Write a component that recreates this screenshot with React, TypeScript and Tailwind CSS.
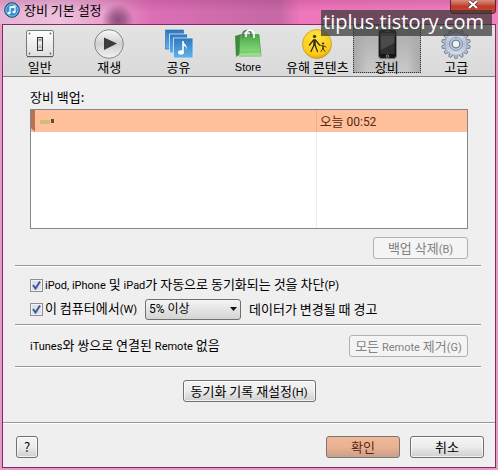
import React, { useState } from 'react';

const buttonBase =
  'h-[22px] rounded-[3px] border border-[#707070] bg-gradient-to-b from-[#f5f5f5] via-[#ebebeb] to-[#cfcfcf] text-center leading-5 shadow-[inset_0_0_0_1px_rgba(255,255,255,0.7)]';
const disabledButton =
  'h-[22px] rounded-[3px] border border-[#adb2b5] bg-[#f4f4f4] text-center leading-5 text-[#838383]';

const SwitchIcon = () => (
  <svg viewBox="0 0 30 30" className="h-[30px] w-[30px] shrink-0" aria-hidden="true">
    <defs>
      <linearGradient id="plate" x1="0" y1="0" x2="0" y2="1">
        <stop offset="0" stopColor="#fff" />
        <stop offset="1" stopColor="#dedede" />
      </linearGradient>
      <linearGradient id="toggle" x1="0" y1="0" x2="0" y2="1">
        <stop offset="0" stopColor="#777" />
        <stop offset=".4" stopColor="#fff" />
        <stop offset="1" stopColor="#aaa" />
      </linearGradient>
    </defs>
    <rect x="1.500" y="1.500" width="27" height="26" rx="1.5" fill="url(#plate)" stroke="#777" />
    <path d="M2 27.700h26" stroke="#555" />
    <rect x="12.500" y="8.500" width="5" height="13" fill="#ddd" stroke="#333" />
    <rect x="13.500" y="10" width="3" height="9" fill="url(#toggle)" />
    <g fill="#666">
      <circle cx="4.5" cy="4.500" r=".9" />
      <circle cx="25.5" cy="4.500" r=".9" />
      <circle cx="4.5" cy="24.500" r=".9" />
      <circle cx="25.5" cy="24.500" r=".9" />
    </g>
  </svg>
);

const PlayIcon = () => (
  <svg viewBox="0 0 30 30" className="h-[30px] w-[30px] shrink-0" aria-hidden="true">
    <defs>
      <linearGradient id="play" x1="0" y1="0" x2="0" y2="1">
        <stop offset="0" stopColor="#fafafa" />
        <stop offset=".5" stopColor="#cfcfcf" />
        <stop offset="1" stopColor="#f4f4f4" />
      </linearGradient>
    </defs>
    <circle cx="15" cy="15" r="14.300" fill="url(#play)" stroke="#858585" />
    <path d="M10 8.500 23 14.500 10 21z" fill="#3c3c3c" />
  </svg>
);

const ShareIcon = () => (
  <svg viewBox="0 0 30 30" className="h-[30px] w-[30px] shrink-0" aria-hidden="true">
    <defs>
      <linearGradient id="share" x1="0" y1="0" x2="0" y2="1">
        <stop offset="0" stopColor="#2f77bd" />
        <stop offset="1" stopColor="#62b2ed" />
      </linearGradient>
    </defs>
    <g fill="url(#share)">
      <rect x="1.500" y="1" width="18" height="19" stroke="#2d6aa8" strokeWidth=".6" />
      <rect x="5.500" y="5" width="18" height="19" stroke="#d7e9f8" strokeWidth=".8" />
      <rect x="9.500" y="9" width="19.500" height="20" stroke="#d7e9f8" strokeWidth=".8" />
    </g>
    <path d="M19 12v11" stroke="#fff" strokeWidth="1.600" />
    <path d="M19 12c.5 3 5 4 3.500 9 0-3-1.500-4-3.500-4.500z" fill="#fff" />
    <ellipse cx="17" cy="23.500" rx="2.900" ry="2.200" fill="#fff" />
  </svg>
);

const StoreIcon = () => (
  <svg viewBox="0 0 30 30" className="h-[30px] w-[30px] shrink-0" aria-hidden="true">
    <defs>
      <linearGradient id="bag" x1="0" y1="0" x2="0" y2="1">
        <stop offset="0" stopColor="#4ba64a" />
        <stop offset=".75" stopColor="#80d476" />
        <stop offset="1" stopColor="#55b64f" />
      </linearGradient>
    </defs>
    <path d="M2 7 7 5.500 8 24 3 28z" fill="#40883b" />
    <path d="M7 5.500h19L28 27H6z" fill="url(#bag)" stroke="#3d943c" strokeWidth=".6" />
    <path d="m6.500 24 21-.5.500 3.500H6z" fill="#a3e399" opacity=".8" />
    <path d="M10 9V5c0-4 8-5 8 0v3" fill="none" stroke="#6a756a" strokeWidth="1.800" />
    <path d="M13 8V5c0-5 8-5 8 0v4" fill="none" stroke="#fff" strokeWidth="1.600" />
  </svg>
);

const ParentalIcon = () => (
  <svg viewBox="0 0 30 30" className="h-[30px] w-[30px] shrink-0" aria-hidden="true">
    <defs>
      <radialGradient id="sun" cx=".45" cy=".3" r=".75">
        <stop offset="0" stopColor="#ffe545" />
        <stop offset=".75" stopColor="#fcca17" />
        <stop offset="1" stopColor="#d79508" />
      </radialGradient>
    </defs>
    <circle cx="15" cy="15" r="14.500" fill="url(#sun)" stroke="#c39222" strokeWidth=".7" />
    <g fill="none" stroke="#34300f" strokeLinecap="round">
      <circle cx="12.500" cy="7.500" r="1.200" fill="#34300f" />
      <path d="M12.500 11.500v4" strokeWidth="2.500" />
      <path d="m11.500 11-4 5M13.500 11l4 5M12 16l-3 6.500M13 16l2.500 6.500" strokeWidth="1.300" />
      <circle cx="21" cy="14.500" r=".7" fill="#34300f" />
      <path d="M21 17v2.500" strokeWidth="1.500" />
      <path d="m20.500 17-2.500-.8M21.500 17l2.500 1M21 19.500 19 22.500M21 19.500l2 3" strokeWidth=".9" />
    </g>
  </svg>
);

const PhoneIcon = () => (
  <svg viewBox="0 0 30 30" className="h-[30px] w-[30px] shrink-0" aria-hidden="true">
    <rect x="6.500" y=".5" width="18" height="29" rx="3" fill="#171717" stroke="#777" />
    <rect x="8.500" y="4" width="14" height="21" fill="#303030" />
    <path d="M22.500 4v10L8.500 21V4z" fill="#4b4b4b" />
    <path d="M13 2.300h5" stroke="#888" strokeWidth=".8" />
    <circle cx="15.500" cy="27.200" r="1.300" fill="#222" stroke="#ccc" strokeWidth=".6" />
  </svg>
);

const GearIcon = () => (
  <svg viewBox="0 0 30 30" className="h-[30px] w-[30px] shrink-0" aria-hidden="true">
    <defs>
      <linearGradient id="gear" x1="0" y1="0" x2="0" y2="1">
        <stop offset="0" stopColor="#dbe3ee" />
        <stop offset=".5" stopColor="#b2bfd1" />
        <stop offset="1" stopColor="#d9e1ed" />
      </linearGradient>
    </defs>
    <g fill="#b8c4d5" stroke="#68758a" strokeWidth=".8">
      {Array.from({ length: 14 }, (_, i) => (
        <path key={i} d="m12.800 5 1-4.300h2.400l1 4.300z" transform={`rotate(${(i * 360) / 14} 15 15)`} />
      ))}
    </g>
    <circle cx="15" cy="15" r="11.200" fill="url(#gear)" stroke="#8794a7" strokeWidth=".5" />
    <circle cx="15" cy="15" r="6.500" fill="none" stroke="#8495ae" />
    <circle cx="15" cy="15" r="3.800" fill="#eff1f4" stroke="#6f7f97" strokeWidth="1.300" />
  </svg>
);

const tabs = [
  { id: 'general', name: '일반', icon: <SwitchIcon /> },
  { id: 'playback', name: '재생', icon: <PlayIcon /> },
  { id: 'sharing', name: '공유', icon: <ShareIcon /> },
  { id: 'store', name: 'Store', icon: <StoreIcon /> },
  { id: 'parental', name: '유해 콘텐츠', icon: <ParentalIcon /> },
  { id: 'devices', name: '장비', icon: <PhoneIcon /> },
  { id: 'advanced', name: '고급', icon: <GearIcon /> },
];

const Latin = ({ children }: { children: React.ReactNode }) => (
  <span className="font-['Roboto',sans-serif] text-[11px]">{children}</span>
);

const Divider = () => <hr className="border-0 border-t border-[#989898] shadow-[0_1px_0_#fff]" />;

const CheckBox = ({ id }: { id: string }) => (
  <span className="relative h-[13px] w-[13px] shrink-0">
    <input
      id={id}
      type="checkbox"
      defaultChecked
      className="peer block h-[13px] w-[13px] appearance-none border border-[#8e8f8f] bg-[#dce2ea] shadow-[inset_0_0_0_1px_#f4f4f4]"
    />
    <svg viewBox="0 0 13 13" className="pointer-events-none absolute inset-0 hidden peer-checked:block" aria-hidden="true">
      <path d="m3 6 2.500 3.500L10 2.500" fill="none" stroke="#42578f" strokeWidth="2" />
    </svg>
  </span>
);

const App = () => {
  const [active, setActive] = useState('devices');

  return (
    <div className="relative flex min-h-screen flex-col bg-[#e59aca] px-0.5 pb-0.5 font-['Noto_Sans_CJK_KR',sans-serif] text-[13px] leading-5 text-black">
      <header className="-mx-0.5 flex h-6 items-start justify-between bg-[radial-gradient(circle_at_118px_20px,rgba(125,65,110,0.85)_0,rgba(125,65,110,0.6)_7px,transparent_16px),linear-gradient(to_bottom,rgba(150,50,115,0.25),transparent_50%),linear-gradient(to_right,#e5b3d3_0,#eec0dc_60px,#e79cca_110px,#dd6fb5_150px,#c669a5_270px,#c669a5_280px,#ef77bb_300px,#ee83c0_100%)]">
        <div className="flex items-center pl-1">
          <svg viewBox="0 0 16 16" className="h-4 w-4" aria-hidden="true">
            <circle cx="8" cy="8" r="7.300" fill="#1d68ad" stroke="#174573" />
            <circle cx="8" cy="8" r="6.200" fill="#3190d3" stroke="#a7d7f4" strokeWidth=".8" />
            <path d="M6 11V5l5-1v6M6 6l5-1" fill="none" stroke="#fff" strokeWidth="1.200" />
            <ellipse cx="5" cy="11" rx="1.600" ry="1.200" fill="#fff" />
            <ellipse cx="10" cy="10" rx="1.600" ry="1.200" fill="#fff" />
          </svg>
          <h1 className="pl-1">장비 기본 설정</h1>
        </div>
        <button
          aria-label="닫기"
          className="mr-0.5 flex h-3.5 w-[46px] items-start justify-center rounded-b-[4px] border border-t-0 border-[#5e2032] bg-gradient-to-b from-[#d88b80] via-[#bf3928] to-[#cf4b37]"
        >
          <svg viewBox="0 0 12 10" className="h-2.5 w-3" aria-hidden="true">
            <path d="m2 1 8 7M10 1 2 8" stroke="#57323a" strokeWidth="3.600" />
            <path d="m2 1 8 7M10 1 2 8" stroke="#fff" strokeWidth="2.200" />
          </svg>
        </button>
      </header>

      <main className="flex grow flex-col border border-[#85285f] bg-[#efefef]">
        <nav className="flex h-[52px] border-b border-[#828282] bg-gradient-to-b from-[#e3e3e3] to-[#dadada] pr-1 pl-0.5">
          {tabs.map((tab) => (
            <button
              key={tab.id}
              onClick={() => setActive(tab.id)}
              aria-pressed={active === tab.id}
              className={`mx-px mb-[3px] flex min-w-0 flex-1 flex-col items-center border border-dotted pt-[3px] whitespace-nowrap ${
                active === tab.id
                  ? 'border-[#333] bg-[linear-gradient(to_right,#aaa,transparent_20%,transparent_80%,#aaa),linear-gradient(to_bottom,#aaa,#c9c9c9)]'
                  : 'border-transparent'
              }`}
            >
              {tab.icon}
              <span className={tab.id === 'store' ? "font-['Liberation_Sans',sans-serif] text-[11px] leading-4" : 'leading-4'}>
                {tab.name}
              </span>
            </button>
          ))}
        </nav>

        <section className="pr-3.5 pl-3">
          <div className="pt-2.5 pr-[13px] pb-1.5 pl-[15px]">
            <h2 className="mb-[2px]">장비 백업:</h2>
            <div className="relative h-[120px] border border-[#828790] bg-white">
              <span className="absolute inset-y-0 left-[65.4%] w-px bg-[#ececec]" />
              <table className="relative w-full table-fixed border-collapse" aria-label="장비 백업">
                <tbody>
                  <tr className="h-[22px] bg-[#ffc09b] text-[#592812]">
                    <td className="w-[65.4%] border-r border-[#efb18e] p-0">
                      <div className="flex h-[22px] items-center">
                        <svg viewBox="0 0 20 22" className="h-[22px] w-5" aria-hidden="true">
                          <path d="M0 0h4v22L0 18z" fill="#b9714e" />
                          <path d="M9 10h10v4H9z" fill="#dcb878" />
                          <path d="M13 10h5v4h-5z" fill="#cbbf78" />
                        </svg>
                        <span className="h-1 w-[3px] bg-[#694b32]" />
                      </div>
                    </td>
                    <td className="p-0 pl-[3px] leading-5">
                      오늘 <span className="font-['Roboto',sans-serif] text-[12px]">00:52</span>
                    </td>
                  </tr>
                </tbody>
              </table>
            </div>
            <div className="flex justify-end pt-2">
              <button disabled className={`${disabledButton} w-[95px]`}>
                백업 삭제<Latin>(B)</Latin>
              </button>
            </div>
          </div>
          <Divider />

          <div className="flex flex-col gap-0.5 px-[15px] pt-2 pb-1">
            <div className="flex h-[22px] items-center gap-0.5">
              <CheckBox id="prevent-sync" />
              <label htmlFor="prevent-sync">
                <Latin>iPod, iPhone</Latin> 및 <Latin>iPad</Latin>가 자동으로 동기화되는 것을 차단<Latin>(P)</Latin>
              </label>
            </div>
            <div className="flex h-[22px] items-center gap-0.5">
              <CheckBox id="warn-change" />
              <label htmlFor="warn-change">
                이 컴퓨터에서<Latin>(W)</Latin>
              </label>
              <div className="relative ml-1.5">
                <select
                  aria-label="데이터 변경 비율"
                  className="block h-[21px] w-24 appearance-none rounded-[3px] border border-[#707070] bg-gradient-to-b from-[#f4f4f4] to-[#d4d4d4] pl-[3px] font-['Roboto','Noto_Sans_CJK_KR',sans-serif] text-[12px] leading-[19px]"
                >
                  <option>5% 이상</option>
                  <option>10% 이상</option>
                </select>
                <svg viewBox="0 0 7 4" className="pointer-events-none absolute top-2 right-1 h-1 w-[7px]" aria-hidden="true">
                  <path d="M0 0h7L3.500 4z" fill="#111" />
                </svg>
              </div>
              <label htmlFor="warn-change" className="ml-1.5">
                데이터가 변경될 때 경고
              </label>
            </div>
          </div>
          <Divider />

          <div className="flex items-center justify-between pt-2.5 pr-[13px] pb-[9px] pl-[15px]">
            <p>
              <Latin>iTunes</Latin>와 쌍으로 연결된 <Latin>Remote</Latin> 없음
            </p>
            <button disabled className={`${disabledButton} w-[119px] whitespace-nowrap`}>
              모든 <Latin>Remote</Latin> 제거<Latin>(G)</Latin>
            </button>
          </div>
          <Divider />

          <div className="flex justify-center pt-[13px] pb-5 pl-0.5">
            <button className={`${buttonBase} w-[133px] whitespace-nowrap`}>
              동기화 기록 재설정<Latin>(H)</Latin>
            </button>
          </div>
        </section>

        <footer className="mt-auto flex items-center border-t border-[#989898] pt-[13px] pr-[11px] pb-[9px] pl-[13px] shadow-[inset_0_1px_0_#fff]">
          <button aria-label="도움말" className={`${buttonBase} w-[22px]`}>
            ?
          </button>
          <button className="ml-auto h-[22px] w-[74px] rounded-[3px] border border-[#777] bg-gradient-to-b from-[#efb899] via-[#eab192] to-[#c9a089] leading-5 text-[#592812]">
            확인
          </button>
          <button className={`${buttonBase} ml-2.5 w-[74px]`}>취소</button>
        </footer>
      </main>

      <div className="absolute top-2.5 right-1.5 h-[26px] bg-[#333]/70 pr-2 pl-0.5 font-['Open_Sans',sans-serif] text-[20px] leading-6 text-white">
        tiplus.tistory.com
      </div>
    </div>
  );
};

export default App;
